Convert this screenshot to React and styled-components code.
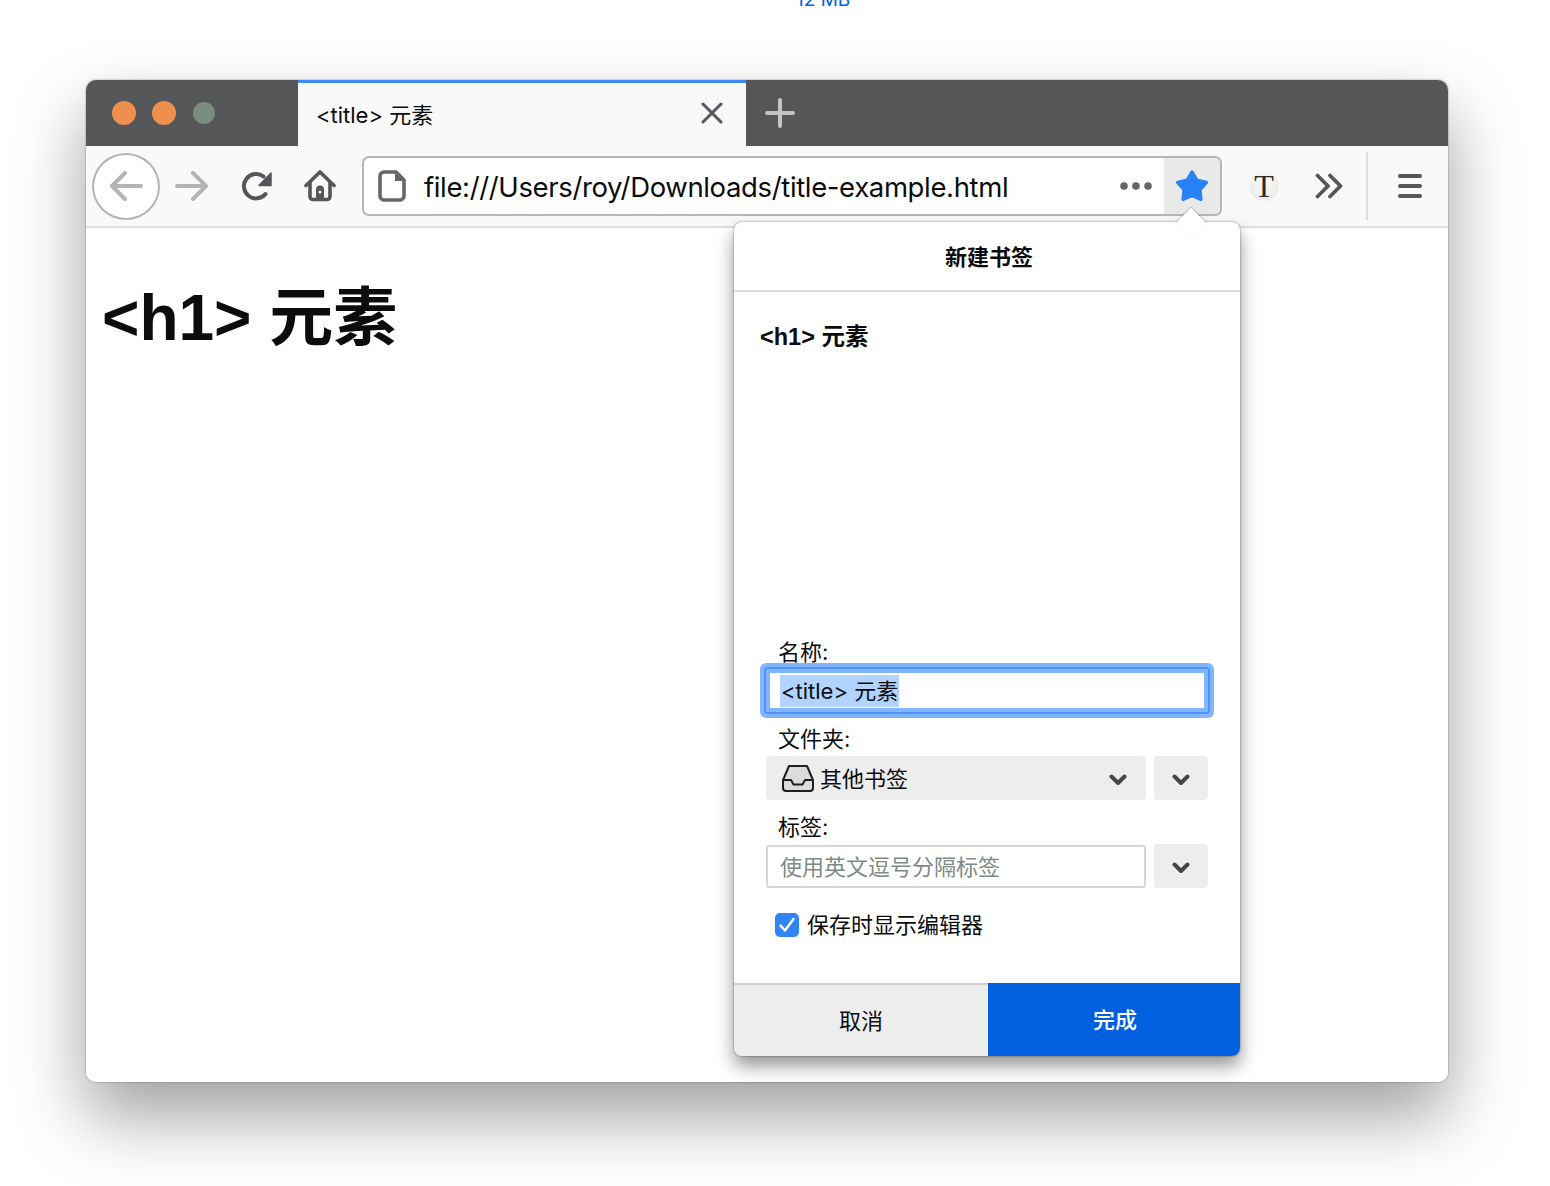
import React from 'react';
import styled, { createGlobalStyle } from 'styled-components';

const UI_FONT = '"Inter", "Noto Sans CJK SC", sans-serif';
const BOLD_FONT = '"Liberation Sans", "Noto Sans CJK SC", sans-serif';

const GlobalStyle = createGlobalStyle`
  html, body {
    margin: 0;
    padding: 0;
    background: #fff;
    color: #0c0c0d;
    font-family: ${UI_FONT};
  }
  #root { height: 1186px; overflow: hidden; }
`;

const Page = styled.div`
  height: 1186px;
  overflow: hidden;
  background: #fff;
`;

const Caption = styled.div`
  display: flex;
  align-items: flex-end;
  height: 8px;
  padding-left: 796px;
  overflow: hidden;
  font-size: 19px;
  line-height: 16px;
  color: #0060df;
`;

const Window = styled.div`
  position: relative;
  display: flex;
  flex-direction: column;
  width: 1362px;
  height: 1002px;
  margin: 72px 0 0 86px;
  border-radius: 10px;
  background: #fff;
  box-shadow: 0 0 2px rgba(0, 0, 0, 0.45), 0 34px 70px rgba(0, 0, 0, 0.38);
`;

const TabBar = styled.div`
  display: flex;
  flex: none;
  height: 66px;
  border-radius: 10px 10px 0 0;
  background: #555658;
  overflow: hidden;
`;

const Lights = styled.div`
  display: flex;
  align-items: center;
  gap: 16px;
  width: 212px;
  padding: 0 0 0 26px;
  box-sizing: border-box;
`;

const Light = styled.span`
  width: 24px;
  height: 24px;
  border-radius: 50%;
  background: ${(p) => p.$color};
  transform: scale(${(p) => p.$scale || 1});
`;

const Tab = styled.div`
  display: flex;
  align-items: center;
  justify-content: space-between;
  box-sizing: border-box;
  width: 448px;
  padding: 0 23px 4px 18px;
  border-top: 3px solid #3e8df6;
  background: #f9f9fa;
  font-size: 22px;
`;

const NewTab = styled.div`
  display: flex;
  align-items: center;
  padding-left: 19px;
`;

const Toolbar = styled.div`
  display: flex;
  flex: none;
  align-items: center;
  box-sizing: border-box;
  height: 82px;
  padding-left: 6px;
  border-bottom: 2px solid #dfdfe0;
  background: #f9f9fa;
`;

const BackButton = styled.div`
  display: flex;
  flex: none;
  align-items: center;
  justify-content: center;
  box-sizing: border-box;
  width: 68px;
  height: 67px;
  border: 2px solid #b4b4b4;
  border-radius: 50%;
  background: #fff;
`;

const ToolIcon = styled.svg`
  display: block;
  flex: none;
  margin-left: ${(p) => p.$left || 0}px;
`;

const UrlBar = styled.div`
  display: flex;
  flex: none;
  align-items: center;
  box-sizing: border-box;
  width: 860px;
  height: 60px;
  margin-left: 26px;
  padding-left: 14px;
  border: 2px solid #b6b6b6;
  border-radius: 7px;
  background: #fff;
`;

const UrlText = styled.span`
  flex: 1;
  margin-left: 18px;
  padding-top: 2px;
  font-size: 27.5px;
  line-height: 54px;
  letter-spacing: -0.36px;
  white-space: nowrap;
`;

const StarButton = styled.div`
  display: flex;
  align-items: center;
  justify-content: center;
  width: 56px;
  height: 56px;
  margin-left: 12px;
  border-radius: 0 5px 5px 0;
  background: #e9e9ea;
`;

const FontBadge = styled.div`
  display: flex;
  flex: none;
  align-items: center;
  justify-content: center;
  width: 30px;
  height: 30px;
  margin-left: 27px;
  border-radius: 50%;
  background: radial-gradient(circle at 50% 35%, #fbfbfb, #e6e6e6);
  font-family: "Liberation Serif", serif;
  font-size: 32px;
  line-height: 30px;
  color: #2f2a26;
`;

const Divider = styled.div`
  flex: none;
  width: 2px;
  height: 68px;
  margin-left: 23px;
  background: #dcdcdc;
`;

const Content = styled.main`
  flex: 1;
  padding: 51px 16px;
  background: #fff;
  border-radius: 0 0 10px 10px;
`;

const Heading = styled.h1`
  margin: 0;
  font-family: ${BOLD_FONT};
  font-size: 64px;
  line-height: 78px;
  font-weight: 700;
  color: #0c0c0c;
`;

const Panel = styled.section`
  position: absolute;
  top: 142px;
  left: 648px;
  display: flex;
  flex-direction: column;
  box-sizing: border-box;
  width: 506px;
  height: 834px;
  border-radius: 8px;
  background: #fff;
  box-shadow: 0 0 2px rgba(0, 0, 0, 0.55), 0 10px 18px rgba(0, 0, 0, 0.42);
`;

const PanelArrow = styled.span`
  position: absolute;
  top: -15px;
  left: 441px;
  width: 32px;
  height: 32px;
  background: #fff;
  transform: rotate(45deg) scale(0.68);
  box-shadow: -1px -1px 2px rgba(0, 0, 0, 0.28);
`;

const PanelHeader = styled.header`
  position: relative;
  box-sizing: border-box;
  height: 70px;
  padding-left: 4px;
  border-bottom: 2px solid #dedede;
  font-size: 22px;
  font-weight: 700;
  line-height: 70px;
  text-align: center;
`;

const PageTitle = styled.div`
  margin: 30px 0 0 26px;
  font-family: ${BOLD_FONT};
  font-size: 23.5px;
  font-weight: 700;
  line-height: 30px;
`;

const Form = styled.div`
  display: flex;
  flex-direction: column;
  margin-top: auto;
  padding: 0 32px 46px;
`;

const Label = styled.label`
  display: block;
  height: 24px;
  margin: ${(p) => p.$top || 15}px 0 5px 12px;
  font-size: 22px;
  line-height: 24px;
`;

const NameInput = styled.div`
  display: flex;
  align-items: center;
  box-sizing: border-box;
  height: 43px;
  padding-left: 10px;
  border: 4px solid #82b5ff;
  border-radius: 2px;
  background: #fff;
  box-shadow: 0 0 0 2px #4e92fb, 0 0 0 6px #82b5ff;
  font-size: 22px;
`;

const Selected = styled.span`
  height: 32px;
  padding: 0 1px;
  background: #b0d4ff;
  line-height: 32px;
`;

const Row = styled.div`
  display: flex;
  gap: 8px;
  height: 44px;
`;

const Select = styled.div`
  display: flex;
  flex: 1;
  align-items: center;
  padding: 0 19px 0 16px;
  border-radius: 4px;
  background: #ededed;
  font-size: 22px;
`;

const SelectText = styled.span`
  flex: 1;
  margin: -2px 0 0 6px;
`;

const DropButton = styled.div`
  display: flex;
  flex: none;
  align-items: center;
  justify-content: center;
  width: 54px;
  border-radius: 4px;
  background: #ededed;
`;

const TagsInput = styled.div`
  flex: 1;
  box-sizing: border-box;
  margin-top: 1px;
  padding-left: 12px;
  border: 2px solid #d7d7db;
  border-radius: 3px;
  font-size: 22px;
  line-height: 41px;
  color: #7f8a85;
`;

const CheckRow = styled.div`
  display: flex;
  align-items: center;
  gap: 8px;
  height: 24px;
  margin: 25px 0 0 9px;
  font-size: 22px;
  line-height: 20px;
`;

const CheckText = styled.span`
  margin-top: -1px;
`;

const CheckBox = styled.span`
  display: flex;
  align-items: center;
  justify-content: center;
  width: 24px;
  height: 24px;
  border-radius: 5px;
  background: #2f85f6;
`;

const Footer = styled.footer`
  display: flex;
  flex: none;
  height: 73px;
  border-radius: 0 0 8px 8px;
  overflow: hidden;
`;

const FooterButton = styled.div`
  display: flex;
  flex: ${(p) => (p.$primary ? '1' : 'none')};
  align-items: center;
  justify-content: center;
  box-sizing: border-box;
  width: ${(p) => (p.$primary ? 'auto' : '254px')};
  padding: 0 0 4px ${(p) => (p.$primary ? '2px' : '0')};
  font-size: 22px;
  font-weight: ${(p) => (p.$primary ? 500 : 400)};
  color: ${(p) => (p.$primary ? '#fff' : '#0c0c0d')};
  background: ${(p) => (p.$primary ? '#0060df' : '#ededed')};
  border-top: ${(p) => (p.$primary ? '0' : '2px solid #d0d0d0')};
`;

const ChevronIcon = styled.svg`
  display: block;
  margin-top: 3px;
`;

const Chevron = () => (
  <ChevronIcon width="18" height="12" viewBox="0 0 18 12" fill="none">
    <path d="M2.500 2.500 9 9l6.500-6.500" stroke="#45454a" strokeWidth="4" strokeLinecap="round" strokeLinejoin="round" />
  </ChevronIcon>
);

export default function App() {
  return (
    <Page>
      <GlobalStyle />
      <Caption>12 MB</Caption>
      <Window>
        <TabBar>
          <Lights>
            <Light $color="#ef8f4e" />
            <Light $color="#ef8f4e" />
            <Light $color="#7b8d7e" $scale={0.92} />
          </Lights>
          <Tab>
            &lt;title&gt; 元素
            <svg width="22" height="22" viewBox="0 0 22 22" fill="none">
              <path d="M2 2l18 18M20 2 2 20" stroke="#55565a" strokeWidth="3" strokeLinecap="round" />
            </svg>
          </Tab>
          <NewTab>
            <svg width="30" height="30" viewBox="0 0 30 30" fill="none">
              <path d="M15 2v26M2 15h26" stroke="#c4c4c6" strokeWidth="4" strokeLinecap="round" />
            </svg>
          </NewTab>
        </TabBar>

        <Toolbar>
          <BackButton>
            <svg width="34" height="30" viewBox="0 0 34 30" fill="none">
              <path d="M32 15H3M16 2 3 15l13 13" stroke="#b4b4b4" strokeWidth="4" strokeLinecap="round" strokeLinejoin="round" />
            </svg>
          </BackButton>
          <ToolIcon $left={15} width="34" height="30" viewBox="0 0 34 30" fill="none">
            <path d="M2 15h29M18 2l13 13-13 13" stroke="#b4b4b4" strokeWidth="4" strokeLinecap="round" strokeLinejoin="round" />
          </ToolIcon>
          <ToolIcon $left={32} width="32" height="32" viewBox="0 0 32 32" fill="none">
            <path d="M24.500 24A12.200 12.200 0 1 1 22.500 6.500" stroke="#55565a" strokeWidth="4" strokeLinecap="round" />
            <path d="M30 3V15.500H18z" fill="#55565a" stroke="#55565a" strokeLinejoin="round" strokeWidth="1.500" />
          </ToolIcon>
          <ToolIcon $left={31} width="32" height="32" viewBox="0 0 32 32" fill="none">
            <path d="M2 15.500 16 2l14 13.500" stroke="#55565a" strokeWidth="3.600" strokeLinecap="round" strokeLinejoin="round" />
            <path d="M6 12v14.500a3 3 0 0 0 3 3h14a3 3 0 0 0 3-3V12" stroke="#55565a" strokeWidth="3.600" />
            <path d="M12 19.500a4 4 0 0 1 8 0V31h-8z" fill="#55565a" />
            <circle cx="16" cy="22" r="1.500" fill="#f4f4f4" />
          </ToolIcon>
          <UrlBar>
            <svg width="28" height="32" viewBox="0 0 28 32" fill="none">
              <path
                d="M6 2h12l8 8v16a4 4 0 0 1-4 4H6a4 4 0 0 1-4-4V6a4 4 0 0 1 4-4z"
                stroke="#66666a"
                strokeWidth="3.600"
                strokeLinejoin="round"
              />
              <path d="M17 3v8h8z" fill="#66666a" />
            </svg>
            <UrlText>file:///Users/roy/Downloads/title-example.html</UrlText>
            <svg width="32" height="8" viewBox="0 0 32 8">
              <circle cx="4" cy="4" r="3.800" fill="#66666a" />
              <circle cx="16" cy="4" r="3.800" fill="#66666a" />
              <circle cx="28" cy="4" r="3.800" fill="#66666a" />
            </svg>
            <StarButton>
              <svg width="36" height="36" viewBox="0 0 32 32">
                <path
                  d="M16 3.500 20.400 10.900 28.800 12.800 23.100 19.300 23.900 27.900 16 24.500 8.100 27.900 8.900 19.300 3.200 12.800 11.600 10.900z"
                  fill="#2a81f6"
                  stroke="#2a81f6"
                  strokeWidth="3"
                  strokeLinejoin="round"
                />
              </svg>
            </StarButton>
          </UrlBar>
          <FontBadge>T</FontBadge>
          <ToolIcon $left={36} width="28" height="26" viewBox="0 0 28 26" fill="none">
            <path d="M2.500 2.500 13 13 2.500 23.500M15 2.500 25.500 13 15 23.500" stroke="#55565a" strokeWidth="3.800" strokeLinecap="round" strokeLinejoin="round" />
          </ToolIcon>
          <Divider />
          <ToolIcon $left={30} width="24" height="24" viewBox="0 0 24 24" fill="none">
            <path d="M2 2h20M2 12h20M2 22h20" stroke="#55565a" strokeWidth="4" strokeLinecap="round" />
          </ToolIcon>
        </Toolbar>

        <Content>
          <Heading>&lt;h1&gt; 元素</Heading>
        </Content>

        <Panel>
          <PanelArrow />
          <PanelHeader>新建书签</PanelHeader>
          <PageTitle>&lt;h1&gt; 元素</PageTitle>
          <Form>
            <Label $top={1}>名称:</Label>
            <NameInput>
              <Selected>&lt;title&gt; 元素</Selected>
            </NameInput>
            <Label>文件夹:</Label>
            <Row>
              <Select>
                <svg width="32" height="28" viewBox="0 0 32 28" fill="none">
                  <path
                    d="M7 2h18l6 14v8a3 3 0 0 1-3 3H4a3 3 0 0 1-3-3v-8z"
                    fill="#dcdcdc"
                    stroke="#1f1f22"
                    strokeWidth="2"
                    strokeLinejoin="round"
                  />
                  <path d="M1 16h8l2.500 4.500h9L23 16h8" stroke="#1f1f22" strokeWidth="2" strokeLinejoin="round" />
                </svg>
                <SelectText>其他书签</SelectText>
                <Chevron />
              </Select>
              <DropButton>
                <Chevron />
              </DropButton>
            </Row>
            <Label>标签:</Label>
            <Row>
              <TagsInput>使用英文逗号分隔标签</TagsInput>
              <DropButton>
                <Chevron />
              </DropButton>
            </Row>
            <CheckRow>
              <CheckBox>
                <svg width="18" height="16" viewBox="0 0 18 16" fill="none">
                  <path d="M2.500 8.500 7 13.500 15.500 2" stroke="#fff" strokeWidth="2.400" strokeLinecap="round" strokeLinejoin="round" />
                </svg>
              </CheckBox>
              <CheckText>保存时显示编辑器</CheckText>
            </CheckRow>
          </Form>
          <Footer>
            <FooterButton>取消</FooterButton>
            <FooterButton $primary>完成</FooterButton>
          </Footer>
        </Panel>
      </Window>
    </Page>
  );
}
